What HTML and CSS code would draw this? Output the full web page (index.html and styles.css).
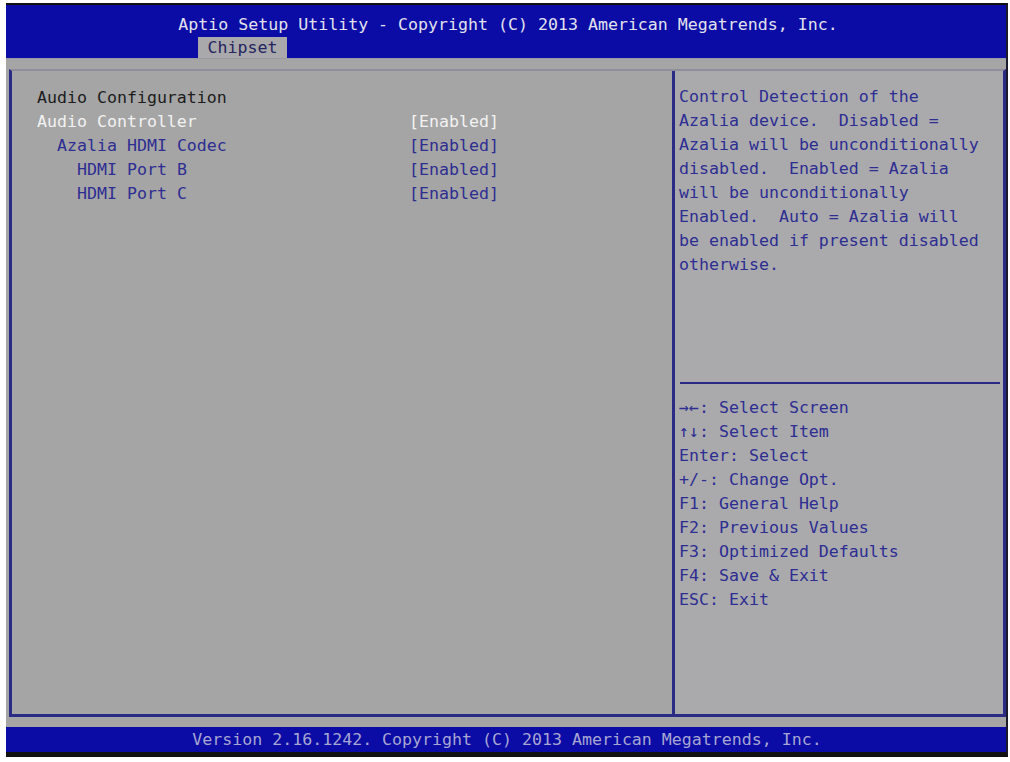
FILE: index.html
```html
<!DOCTYPE html>
<html lang="en">
<head>
    <meta charset="UTF-8">
    <title>Aptio Setup Utility - Chipset</title>
    <link rel="stylesheet" href="styles.css">
</head>
<body>
    <div class="screen">
        <div class="header">
            <div class="title">Aptio Setup Utility - Copyright (C) 2013 American Megatrends, Inc.</div>
            <div class="tabs">
                <div class="tab">Chipset</div>
            </div>
        </div>

        <div class="main">
            <div class="panel">
                <div class="settings">
                    <div class="row heading"><span>Audio Configuration</span></div>
                    <div class="row selected"><span>Audio Controller</span><span>[Enabled]</span></div>
                    <div class="row indent1"><span>Azalia HDMI Codec</span><span>[Enabled]</span></div>
                    <div class="row indent2"><span>HDMI Port B</span><span>[Enabled]</span></div>
                    <div class="row indent2"><span>HDMI Port C</span><span>[Enabled]</span></div>
                </div>

                <div class="side">
                    <div class="help">Control Detection of the
Azalia device.  Disabled =
Azalia will be unconditionally
disabled.  Enabled = Azalia
will be unconditionally
Enabled.  Auto = Azalia will
be enabled if present disabled
otherwise.</div>
                    <div class="divider"></div>
                    <div class="keys">→←: Select Screen
↑↓: Select Item
Enter: Select
+/-: Change Opt.
F1: General Help
F2: Previous Values
F3: Optimized Defaults
F4: Save &amp; Exit
ESC: Exit</div>
                </div>
            </div>
        </div>

        <div class="footer">Version 2.16.1242. Copyright (C) 2013 American Megatrends, Inc.</div>
    </div>
</body>
</html>
```

FILE: styles.css
```css
body {
    margin: 0;
    background: #fff;
    font-family: "DejaVu Sans Mono", "Liberation Mono", monospace;
    font-size: 16.6px;
}
.screen {
    margin: 3px 0 0 6px;
    width: 1000px;
    border-top: 2px solid #111;
    border-right: 2px solid #1a1a2a;
    border-bottom: 5px solid #111;
}
.header {
    background: #0b0ba6;
    height: 53px;
    display: flex;
    flex-direction: column;
}
.title {
    padding-top: 8px;
    line-height: 24px;
    text-align: center;
    color: #e2e2ec;
    padding-left: 4px;
}
.tabs {
    display: flex;
    padding-left: 192px;
}
.tab {
    background: #a9a9ab;
    color: #24245e;
    width: 89px;
    height: 21px;
    line-height: 21px;
    text-align: center;
}
.main {
    background: #a5a5a5;
    padding: 10px 0 10px 3px;
    border-top: 1px solid #9a9aa4;
}
.panel {
    height: 648px;
    box-sizing: border-box;
    display: grid;
    grid-template-columns: 663px 1fr;
    border-top: 2px solid #8e8e9c;
    border-left: 3px solid #2b2b86;
    border-right: 3px solid #2b2b86;
    border-bottom: 3px solid #2b2b86;
}
.settings {
    padding: 15px 0 0 25px;
    border-right: 3px solid #2b2b86;
}
.row {
    display: grid;
    grid-template-columns: 372px auto;
    line-height: 24px;
    color: #2d2d92;
    white-space: pre;
}
.row.heading {
    color: #1c1c1c;
}
.row.selected {
    color: #f2f2f2;
}
.indent1 span:first-child {
    padding-left: 20px;
}
.indent2 span:first-child {
    padding-left: 40px;
}
.side {
    background: #aaaaad;
    display: flex;
    flex-direction: column;
}
.help, .keys {
    white-space: pre;
    line-height: 24px;
    color: #2d2d92;
    padding-left: 4px;
}
.help {
    padding-top: 14px;
    height: 297px;
}
.divider {
    height: 2px;
    background: #2b2b86;
    margin: 0 3px 0 5px;
}
.keys {
    padding-top: 12px;
}
.footer {
    background: #0b0ba6;
    height: 25px;
    line-height: 25px;
    text-align: center;
    color: #a6a6d2;
    padding-left: 2px;
}
```
